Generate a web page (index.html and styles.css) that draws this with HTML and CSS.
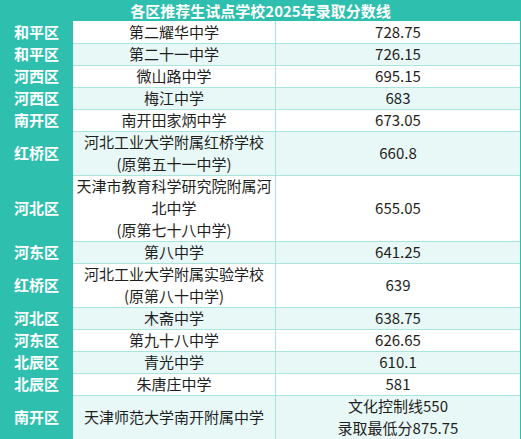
FILE: index.html
```html
<!DOCTYPE html>
<html lang="zh">
<head>
<meta charset="utf-8">
<link rel="stylesheet" href="styles.css">
</head>
<body>
<div class="sheet">
  <div class="title">各区推荐生试点学校2025年录取分数线</div>
  <div class="row"><div class="d">和平区</div><div class="s">第二耀华中学</div><div class="n">728.75</div></div>
  <div class="row alt"><div class="d">和平区</div><div class="s">第二十一中学</div><div class="n">726.15</div></div>
  <div class="row"><div class="d">河西区</div><div class="s">微山路中学</div><div class="n">695.15</div></div>
  <div class="row alt"><div class="d">河西区</div><div class="s">梅江中学</div><div class="n">683</div></div>
  <div class="row"><div class="d">南开区</div><div class="s">南开田家炳中学</div><div class="n">673.05</div></div>
  <div class="row alt h2"><div class="d">红桥区</div><div class="s">河北工业大学附属红桥学校<br>(原第五十一中学)</div><div class="n">660.8</div></div>
  <div class="row h3"><div class="d">河北区</div><div class="s">天津市教育科学研究院附属河北中学<br>(原第七十八中学)</div><div class="n">655.05</div></div>
  <div class="row alt"><div class="d">河东区</div><div class="s">第八中学</div><div class="n">641.25</div></div>
  <div class="row h2"><div class="d">红桥区</div><div class="s">河北工业大学附属实验学校<br>(原第八十中学)</div><div class="n">639</div></div>
  <div class="row alt"><div class="d">河北区</div><div class="s">木斋中学</div><div class="n">638.75</div></div>
  <div class="row"><div class="d">河东区</div><div class="s">第九十八中学</div><div class="n">626.65</div></div>
  <div class="row alt"><div class="d">北辰区</div><div class="s">青光中学</div><div class="n">610.1</div></div>
  <div class="row"><div class="d">北辰区</div><div class="s">朱唐庄中学</div><div class="n">581</div></div>
  <div class="row alt h2"><div class="d">南开区</div><div class="s">天津师范大学南开附属中学</div><div class="n">文化控制线550<br>录取最低分875.75</div></div>
</div>
</body>
</html>
```

FILE: styles.css
```css
html, body {
  margin: 0;
  padding: 0;
  background: #ffffff;
}
.sheet {
  width: 521px;
  font-family: "Noto Sans CJK SC", "Noto Sans", sans-serif;
  font-size: 15px;
  color: #1e1e1e;
}
.title {
  height: 21px;
  line-height: 21px;
  background: #2ebfae;
  color: #ffffff;
  font-weight: bold;
  text-align: center;
  font-size: 15px;
}
.row {
  display: grid;
  grid-template-columns: 73px 203px 245px;
  height: 22px;
  background: #ffffff;
}
.row.alt {
  background: #e8f8f7;
}
.row.h2 { height: 44px; }
.row.h3 { height: 66px; }
.row > div {
  box-sizing: border-box;
  display: flex;
  align-items: center;
  justify-content: center;
  text-align: center;
  line-height: 22px;
  border-bottom: 1px solid #a9e4dd;
}
.d {
  background: #2ebfae;
  color: #ffffff;
  font-weight: bold;
  border-bottom-color: #86d9cf !important;
}
.s {
  border-right: 1px solid #a9e4dd;
  padding: 0 3px;
}
.n {
  border-right: 1px solid #2ebfae;
}
```
